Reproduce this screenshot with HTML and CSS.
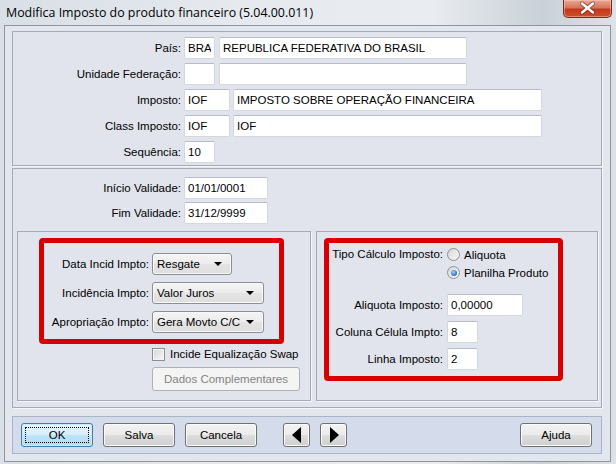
FILE: index.html
```html
<!DOCTYPE html>
<html lang="pt">
<head>
    <meta charset="UTF-8">
    <title>Modifica Imposto do produto financeiro</title>
    <link rel="stylesheet" href="styles.css">
</head>
<body>
    <div class="janela">
        <div class="titulo">
            <span class="titulo-texto">Modifica Imposto do produto financeiro (5.04.00.011)</span>
            <div class="fechar">
                <svg width="49" height="18" viewBox="0 0 49 18">
                    <path d="M19 4.5 L30 13.5 M30 4.5 L19 13.5" stroke="#5b2114" stroke-width="4.2" stroke-linecap="round" opacity="0.55"/>
                    <path d="M19 4.5 L30 13.5 M30 4.5 L19 13.5" stroke="#ffffff" stroke-width="2.4" stroke-linecap="round"/>
                </svg>
            </div>
        </div>

        <div class="cliente">
            <div class="painel painel-topo">
                <div class="grade">
                    <label class="rotulo">País:</label>
                    <div class="campos">
                        <input class="campo w31" value="BRA" readonly>
                        <input class="campo w248" value="REPUBLICA FEDERATIVA DO BRASIL" readonly>
                    </div>
                    <label class="rotulo">Unidade Federação:</label>
                    <div class="campos">
                        <input class="campo w31" value="" readonly>
                        <input class="campo w248" value="" readonly>
                    </div>
                    <label class="rotulo">Imposto:</label>
                    <div class="campos">
                        <input class="campo w46" value="IOF" readonly>
                        <input class="campo w309" value="IMPOSTO SOBRE OPERAÇÃO FINANCEIRA" readonly>
                    </div>
                    <label class="rotulo">Class Imposto:</label>
                    <div class="campos">
                        <input class="campo w46" value="IOF" readonly>
                        <input class="campo w309" value="IOF" readonly>
                    </div>
                    <label class="rotulo">Sequência:</label>
                    <div class="campos">
                        <input class="campo w31" value="10" readonly>
                    </div>
                </div>
            </div>

            <div class="painel painel-meio">
                <div class="grade grade-validade">
                    <label class="rotulo">Início Validade:</label>
                    <div class="campos"><input class="campo w84" value="01/01/0001" readonly></div>
                    <label class="rotulo">Fim Validade:</label>
                    <div class="campos"><input class="campo w84" value="31/12/9999" readonly></div>
                </div>

                <div class="subpaineis">
                    <div class="subpainel sub-esquerda">
                        <div class="destaque destaque-esquerda">
                            <div class="grade-combos">
                                <label class="rotulo">Data Incid Impto:</label>
                                <div class="combo w80"><span>Resgate</span><i class="seta"></i></div>
                                <label class="rotulo">Incidência Impto:</label>
                                <div class="combo w112"><span>Valor Juros</span><i class="seta"></i></div>
                                <label class="rotulo">Apropriação Impto:</label>
                                <div class="combo w112"><span>Gera Movto C/C</span><i class="seta"></i></div>
                            </div>
                        </div>
                        <div class="check-linha">
                            <span class="check"></span>
                            <span>Incide Equalização Swap</span>
                        </div>
                        <button class="botao botao-desab">Dados Complementares</button>
                    </div>

                    <div class="subpainel sub-direita">
                        <div class="destaque destaque-direita">
                            <div class="grade-tipo">
                                <label class="rotulo rotulo-topo">Tipo Cálculo Imposto:</label>
                                <div class="radios">
                                    <div class="radio-linha"><span class="radio"></span>Aliquota</div>
                                    <div class="radio-linha"><span class="radio marcado"></span>Planilha Produto</div>
                                </div>
                            </div>
                            <div class="grade-tipo grade-valores">
                                <label class="rotulo">Aliquota Imposto:</label>
                                <div class="campos"><input class="campo w76" value="0,00000" readonly></div>
                                <label class="rotulo">Coluna Célula Impto:</label>
                                <div class="campos"><input class="campo w31" value="8" readonly></div>
                                <label class="rotulo">Linha Imposto:</label>
                                <div class="campos"><input class="campo w31" value="2" readonly></div>
                            </div>
                        </div>
                    </div>
                </div>
            </div>

            <div class="barra">
                <button class="botao botao-foco"><span class="foco">OK</span></button>
                <button class="botao">Salva</button>
                <button class="botao">Cancela</button>
                <button class="botao botao-seta seta-primeira">
                    <svg width="10" height="16" viewBox="0 0 10 16"><polygon points="9,0 9,16 0,8" fill="#000"/></svg>
                </button>
                <button class="botao botao-seta">
                    <svg width="10" height="16" viewBox="0 0 10 16"><polygon points="1,0 1,16 10,8" fill="#000"/></svg>
                </button>
                <button class="botao botao-ajuda">Ajuda</button>
            </div>
        </div>
    </div>
</body>
</html>
```

FILE: styles.css
```css
* {
    box-sizing: border-box;
}
body {
    margin: 0;
    width: 616px;
    height: 464px;
    overflow: hidden;
    font-family: "Liberation Sans", Arial, sans-serif;
    font-size: 11.5px;
    color: #000;
}
.janela {
    width: 616px;
    height: 464px;
    background: linear-gradient(to right, #d9dfe6 0%, #e6eaef 40%, #e9ecf0 70%, #c9d0d7 88%, #dde2e8 100%);
}
.titulo {
    height: 25px;
    display: flex;
    align-items: flex-start;
}
.titulo-texto {
    font-family: "Open Sans", "Noto Sans", sans-serif;
    font-size: 12.4px;
    padding: 4px 0 0 6px;
    color: #000;
}
.fechar {
    margin-left: auto;
    margin-right: 4px;
    width: 49px;
    height: 18px;
    border: 1px solid #7a2c1c;
    border-top: none;
    border-radius: 0 0 5px 5px;
    background: linear-gradient(#e9a895 0%, #d6765c 45%, #c1391c 55%, #cf4e2c 100%);
    box-shadow: inset 0 0 0 1px rgba(255, 210, 190, 0.45);
}
.fechar svg {
    display: block;
    margin: -1px 0 0 -1px;
}

.cliente {
    margin: 0 5px 0 4px;
    height: 437px;
    border: 1px solid #8e959f;
    background: #e3e6ed;
    padding: 5px 8px 0 7px;
    display: flex;
    flex-direction: column;
}
.painel {
    border: 1px solid #a4abb6;
    background: #e1e4ec;
    box-shadow: 1px 1px 0 #f4f6f9;
}
.painel-topo {
    height: 135px;
    padding-top: 5px;
}
.painel-meio {
    height: 240px;
    margin-top: 2px;
    padding: 8px 3px 6px 4px;
}
.grade {
    display: grid;
    grid-template-columns: 168px auto;
    column-gap: 3px;
    row-gap: 4px;
    align-items: center;
}
.grade-validade {
    margin-left: -4px;
    row-gap: 3px;
}
.rotulo {
    text-align: right;
    white-space: nowrap;
}
.campos {
    display: flex;
    gap: 4px;
}
.campo {
    height: 22px;
    border: 1px solid #d3d8df;
    border-top-color: #b7bdc6;
    border-radius: 2px;
    background: #fff;
    padding: 0 3px;
    font: inherit;
    color: #000;
    outline: none;
}
.w31 { width: 31px; }
.w46 { width: 46px; }
.w76 { width: 76px; }
.w80 { width: 80px; }
.w84 { width: 84px; }
.w112 { width: 112px; }
.w248 { width: 248px; }
.w309 { width: 309px; }
.campos .w309 { margin-left: -1px; }

.subpaineis {
    margin-top: 7px;
    height: 170px;
    display: flex;
    gap: 5px;
}
.subpainel {
    border: 1px solid #a4abb6;
    box-shadow: 1px 1px 0 #f4f6f9;
}
.sub-esquerda {
    width: 294px;
}
.sub-direita {
    width: 282px;
}
.destaque {
    border: 5px solid #d60000;
    border-radius: 4px;
    margin-top: 6px;
}
.destaque-esquerda {
    margin-left: 21px;
    width: 245px;
    height: 106px;
    padding-top: 10px;
}
.destaque-direita {
    margin-left: 7px;
    width: 239px;
    height: 143px;
    padding-top: 5px;
}
.grade-combos {
    display: grid;
    grid-template-columns: 105px auto;
    column-gap: 3px;
    row-gap: 7px;
    align-items: center;
}
.combo {
    height: 22px;
    display: flex;
    align-items: center;
    justify-content: space-between;
    padding: 0 9px 0 4px;
    border: 1px solid #8b8e93;
    border-radius: 3px;
    background: linear-gradient(#f4f4f4, #ececec 50%, #e4e4e4 51%, #dedede);
    box-shadow: inset 0 0 0 1px #f9f9f9;
}
.seta {
    width: 0;
    height: 0;
    border-left: 4px solid transparent;
    border-right: 4px solid transparent;
    border-top: 4px solid #000;
}

.check-linha {
    display: flex;
    align-items: center;
    gap: 5px;
    margin: 3px 0 0 134px;
    height: 14px;
}
.check {
    width: 13px;
    height: 13px;
    border: 1px solid #8e8f8f;
    background: linear-gradient(135deg, #d8d8d8, #f6f6f6);
    box-shadow: inset 0 0 0 1px #f4f4f4;
}

.grade-tipo {
    display: grid;
    grid-template-columns: 114px auto;
    column-gap: 4px;
    row-gap: 5px;
    align-items: center;
}
.rotulo-topo {
    align-self: start;
    line-height: 13px;
}
.radios {
    display: flex;
    flex-direction: column;
    gap: 5px;
}
.radio-linha {
    display: flex;
    align-items: center;
    gap: 4px;
    height: 13px;
}
.radio {
    width: 13px;
    height: 13px;
    border-radius: 50%;
    border: 1px solid #8e8f8f;
    background: linear-gradient(135deg, #d6d6d6, #fafafa);
    display: flex;
    align-items: center;
    justify-content: center;
}
.radio.marcado::after {
    content: "";
    width: 6px;
    height: 6px;
    border-radius: 50%;
    background: radial-gradient(circle at 40% 35%, #9fd2fb, #2b6fc0 70%, #1a4f96);
}
.grade-valores {
    margin-top: 15px;
}

.botao {
    height: 24px;
    width: 72px;
    border: 1px solid #707070;
    border-radius: 3px;
    background: linear-gradient(#f3f3f3, #ebebeb 50%, #dddddd 51%, #cfcfcf);
    box-shadow: inset 0 0 0 1px #fbfbfb;
    font: inherit;
    color: #000;
    padding: 0;
    display: flex;
    align-items: center;
    justify-content: center;
}
.botao-desab {
    width: 148px;
    margin: 6px 0 0 134px;
    border-color: #adb2b5;
    background: #f4f4f4;
    box-shadow: none;
    color: #838383;
}
.barra {
    margin-top: 8px;
    height: 38px;
    border: 1px solid #a9b4c6;
    background: #d4dcec;
    display: flex;
    align-items: center;
    gap: 10px;
    padding: 0 9px 0 8px;
}
.botao-foco {
    border-color: #3c7fb1;
    background: linear-gradient(#e5f4fc, #d6eefb 50%, #bfe4f8 51%, #b0dcf4);
    box-shadow: inset 0 0 0 1px #c7ecfb;
    padding: 3px;
}
.foco {
    flex: 1;
    align-self: stretch;
    display: flex;
    align-items: center;
    justify-content: center;
    border: 1px dotted #000;
}
.botao-seta {
    width: 27px;
}
.seta-primeira {
    margin-left: 16px;
}
.botao-ajuda {
    margin-left: auto;
}
```
